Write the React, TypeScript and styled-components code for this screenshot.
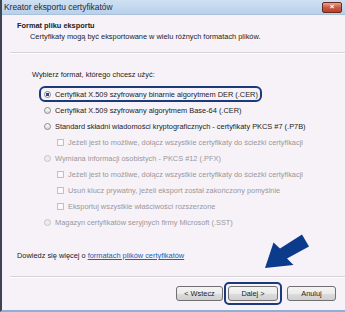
import * as React from 'react';
import styled, { createGlobalStyle } from 'styled-components';

const GlobalStyle = createGlobalStyle`
  html, body {
    margin: 0;
    padding: 0;
    background: #ffffff;
  }
  body {
    font-family: "Liberation Sans", Arial, sans-serif;
  }
`;

const Frame = styled.div`
  position: relative;
  width: 345px;
  height: 312px;
  box-sizing: border-box;
  border-left: 2px solid #3d4650;
  border-bottom: 2px solid #8fb0d6;
  background: #f7f2f7;
  display: flex;
  flex-direction: column;
  overflow: hidden;
  font-size: 7.4px;
  color: #1b1b1b;
`;

const TitleBar = styled.div`
  flex: none;
  height: 15px;
  box-sizing: border-box;
  display: flex;
  align-items: center;
  justify-content: space-between;
  padding: 0 3px 0 2px;
  background: linear-gradient(#cfe0f3, #b9d0eb);
  border-bottom: 1px solid #a9c0da;
  font-size: 8.4px;
  color: #1d2a3a;
`;

const CloseButton = styled.div`
  width: 18px;
  height: 9px;
  border-radius: 2px;
  border: 1px solid #6b2a1e;
  background: linear-gradient(#e4a792, #c85a40 50%, #b8402a);
  display: flex;
  align-items: center;
  justify-content: center;
  color: #ffffff;
  font-size: 8px;
  font-weight: bold;
  line-height: 1;
`;

const Header = styled.div`
  padding: 5px 0 0 15px;
`;

const HeaderTitle = styled.div`
  font-weight: bold;
  line-height: 11px;
`;

const HeaderText = styled.div`
  padding-left: 13px;
  line-height: 11px;
`;

const Separator = styled.div<{ $top: number }>`
  margin: ${p => p.$top}px 0 0 8px;
  border-top: 1px solid #d8d3d8;
  border-bottom: 1px solid #ffffff;
`;

const Content = styled.div`
  padding-left: 30px;
  display: flex;
  flex-direction: column;
  align-items: flex-start;
`;

const Prompt = styled.div`
  margin-top: 15px;
  margin-bottom: 5px;
  line-height: 12px;
`;

const OptionRow = styled.div<{ $indent?: number; $highlight?: boolean; $disabled?: boolean }>`
  display: inline-flex;
  align-items: center;
  gap: 4px;
  height: 16px;
  box-sizing: border-box;
  margin-left: 7px;
  padding: 0 2px 0 ${p => 3 + (p.$indent || 0)}px;
  border: 2px solid ${p => (p.$highlight ? '#1a3a7c' : 'transparent')};
  border-radius: 6px;
  color: ${p => (p.$disabled ? '#9a979a' : '#1b1b1b')};
  white-space: nowrap;
`;

const Radio = styled.span<{ $checked?: boolean; $disabled?: boolean }>`
  width: 7px;
  height: 7px;
  box-sizing: border-box;
  border-radius: 50%;
  border: 1px solid ${p => (p.$disabled ? '#c6c3c6' : '#8a8a8a')};
  background: ${p =>
    p.$checked
      ? 'radial-gradient(circle, #2b4d86 0 1.6px, #f4f4f4 2px)'
      : p.$disabled
      ? '#eeeaee'
      : 'linear-gradient(#ffffff, #d8d8d8)'};
  flex: none;
`;

const Checkbox = styled.span`
  width: 7px;
  height: 7px;
  box-sizing: border-box;
  border: 1px solid #c2bfc2;
  background: #fbf9fb;
  flex: none;
`;

const LearnMore = styled.div`
  margin: 20px 0 0 15px;
  line-height: 12px;
`;

const Link = styled.a`
  color: #2160b6;
  text-decoration: underline;
`;

const ButtonBar = styled.div`
  display: flex;
  justify-content: flex-end;
  align-items: center;
  gap: 5px;
  padding: 4px 9px 0 0;
`;

const DefaultRing = styled.div`
  padding: 2px;
  border: 2px solid #1a3a7c;
  border-radius: 5px;
  margin-left: -4px;
`;

const Button = styled.div<{ $width: number }>`
  width: ${p => p.$width}px;
  height: 15px;
  box-sizing: border-box;
  border: 1px solid #707070;
  border-radius: 3px;
  background: linear-gradient(#f4f4f4 0%, #ebebeb 50%, #dddddd 51%, #cfcfcf 100%);
  display: flex;
  align-items: center;
  justify-content: center;
  color: #1b1b1b;
`;

const Arrow = styled.svg`
  position: absolute;
  left: 256px;
  top: 228px;
  width: 56px;
  height: 46px;
`;

const formats = [
  { label: 'Certyfikat X.509 szyfrowany binarnie algorytmem DER (.CER)', checked: true },
  { label: 'Certyfikat X.509 szyfrowany algorytmem Base-64 (.CER)' },
  { label: 'Standard składni wiadomości kryptograficznych - certyfikaty PKCS #7 (.P7B)' },
];

export default function App() {
  return (
    <>
      <GlobalStyle />
      <Frame>
        <TitleBar>
          <span>Kreator eksportu certyfikatów</span>
          <CloseButton>×</CloseButton>
        </TitleBar>
        <Header>
          <HeaderTitle>Format pliku eksportu</HeaderTitle>
          <HeaderText>Certyfikaty mogą być eksportowane w wielu różnych formatach plików.</HeaderText>
        </Header>
        <Separator $top={10} />
        <Content>
          <Prompt>Wybierz format, którego chcesz użyć:</Prompt>
          {formats.map(f => (
            <OptionRow key={f.label} $highlight={f.checked}>
              <Radio $checked={f.checked} />
              {f.label}
            </OptionRow>
          ))}
          <OptionRow $indent={13} $disabled>
            <Checkbox />
            Jeżeli jest to możliwe, dołącz wszystkie certyfikaty do ścieżki certyfikacji
          </OptionRow>
          <OptionRow $disabled>
            <Radio $disabled />
            Wymiana informacji osobistych - PKCS #12 (.PFX)
          </OptionRow>
          <OptionRow $indent={13} $disabled>
            <Checkbox />
            Jeżeli jest to możliwe, dołącz wszystkie certyfikaty do ścieżki certyfikacji
          </OptionRow>
          <OptionRow $indent={13} $disabled>
            <Checkbox />
            Usuń klucz prywatny, jeżeli eksport został zakończony pomyślnie
          </OptionRow>
          <OptionRow $indent={13} $disabled>
            <Checkbox />
            Eksportuj wszystkie właściwości rozszerzone
          </OptionRow>
          <OptionRow $disabled>
            <Radio $disabled />
            Magazyn certyfikatów seryjnych firmy Microsoft (.SST)
          </OptionRow>
        </Content>
        <LearnMore>
          Dowiedz się więcej o <Link>formatach plików certyfikatów</Link>
        </LearnMore>
        <Separator $top={14} />
        <ButtonBar>
          <Button $width={47}>&lt; Wstecz</Button>
          <DefaultRing>
            <Button $width={50}>Dalej &gt;</Button>
          </DefaultRing>
          <Button $width={49}>Anuluj</Button>
        </ButtonBar>
        <Arrow viewBox="256 228 56 46">
          <polygon
            points="263,268 271.5,242.5 278,248.5 300,234.5 307,246.5 285,258.5 291.5,265"
            fill="#0c3b8c"
          />
        </Arrow>
      </Frame>
    </>
  );
}
